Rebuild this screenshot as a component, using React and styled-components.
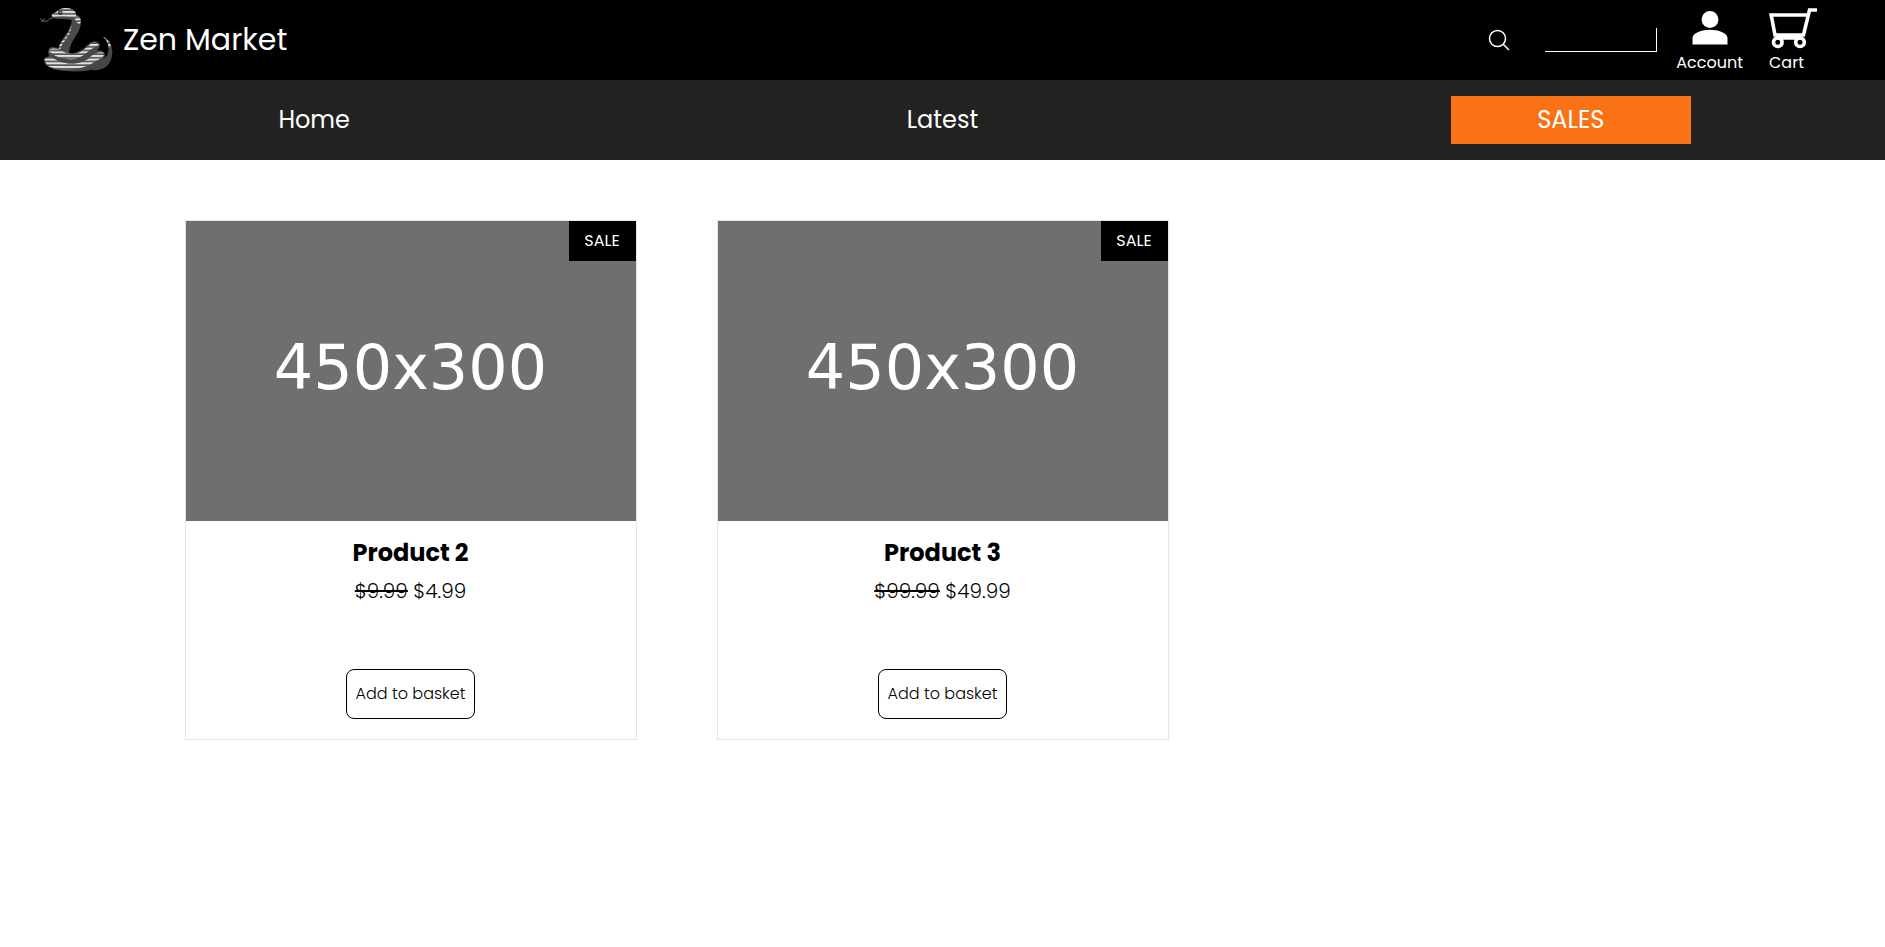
import React from "react";
import styled, { createGlobalStyle } from "styled-components";

const GlobalStyle = createGlobalStyle`
  *, *::before, *::after { box-sizing: border-box; }
  body {
    margin: 0;
    background: #fff;
    color: #000;
    font-family: Poppins, Inter, "Liberation Sans", sans-serif;
    font-size: 16px;
    line-height: 24px;
  }
`;

const Header = styled.header`
  display: flex;
  align-items: center;
  justify-content: space-between;
  height: 80px;
  padding: 0 66px 0 39px;
  background: #000;
  color: #fff;
`;

const Brand = styled.a`
  display: flex;
  align-items: center;
  gap: 8px;
  color: inherit;
  font-size: 30px;
  line-height: 36px;
  text-decoration: none;
`;

const Tools = styled.div`
  display: flex;
  align-items: center;
`;

const SearchForm = styled.form`
  display: flex;
  align-items: center;
  gap: 35px;
  margin-right: 19px;
`;

const SearchButton = styled.button`
  display: flex;
  padding: 0;
  border: 0;
  background: none;
  color: inherit;
`;

const SearchInput = styled.input`
  width: 112px;
  height: 24px;
  padding: 0 4px;
  border: solid #fff;
  border-width: 0 1px 1px 0;
  background: #000;
  color: #fff;
  font: inherit;
`;

const ToolLink = styled.a`
  display: flex;
  flex-direction: column;
  align-items: ${({ $align }) => $align || "center"};
  color: inherit;
  text-decoration: none;
  svg { display: block; }
`;

const ToolLinks = styled.div`
  display: flex;
  gap: 26px;
  padding-bottom: 5px;
`;

const Nav = styled.nav`
  display: grid;
  grid-template-columns: repeat(3, 1fr);
  place-items: center;
  height: 80px;
  background: #222220;
`;

const NavLink = styled.a`
  color: #fff;
  font-size: 24px;
  line-height: 32px;
  text-decoration: none;
`;

const SalesLink = styled(NavLink)`
  width: 240px;
  padding: 8px;
  background: #f97316;
  text-align: center;
`;

const Products = styled.main`
  display: grid;
  grid-template-columns: repeat(3, 452px);
  justify-content: center;
  gap: 80px;
  padding: 60px 0;
`;

const Card = styled.article`
  position: relative;
  display: flex;
  flex-direction: column;
  align-items: center;
  padding-bottom: 20px;
  border: 1px solid #e5e5e5;
`;

const Picture = styled.div`
  display: flex;
  align-items: center;
  justify-content: center;
  width: 100%;
  height: 300px;
  padding-bottom: 6px;
  background: #6f6f6f;
  color: #fff;
  font-family: "DejaVu Sans", sans-serif;
  font-size: 62px;
  line-height: 62px;
`;

const Badge = styled.span`
  position: absolute;
  top: 0;
  right: 0;
  min-width: 67px;
  padding: 8px 12px;
  background: #000;
  color: #fff;
  text-align: center;
`;

const Title = styled.h2`
  margin: 16px 0 8px;
  font-size: 24px;
  font-weight: 700;
  line-height: 32px;
`;

const Price = styled.p`
  margin: 0 0 64px;
  font-size: 20px;
  font-weight: 300;
  line-height: 28px;
  s { text-decoration-thickness: 2px; }
`;

const BasketButton = styled.button`
  min-width: 129px;
  height: 50px;
  padding: 0 8px;
  border: 1px solid #000;
  border-radius: 8px;
  background: #fff;
  color: #000;
  font: inherit;
  font-weight: 300;
`;

function Snake() {
  return (
    <svg width="76" height="68" viewBox="30 18 228 204" aria-hidden="true">
      <defs>
        <pattern id="bands" width="12" height="11" patternUnits="userSpaceOnUse">
          <rect width="12" height="11" fill="#555" />
          <rect width="12" height="6" fill="#e2e2e2" />
        </pattern>
      </defs>
      <path d="M74 53Q62 55 57 61Q50 66 43 63L33 56M43 63L36 66M43 63L46 55" fill="none" stroke="#666" strokeWidth="3" />
      <path d="M222 110Q247 119 250 153Q251 181 235 197Q218 211 190 211L202 181Q225 180 235 165Q242 146 234 127Z" fill="#464646" />
      <path d="M222 110Q240 117 246 139L240 145Q237 122 222 110Z" fill="url(#bands)" />
      <path d="M68 43L82 36Q92 24 111 24Q138 24 142 45Q157 48 156 67Q155 87 139 110Q125 128 119 160L88 148Q89 134 107 108Q129 79 128 60Q111 56 92 57Q75 57 69 52Z" fill="#4b4b4b" />
      <path d="M68 43L82 36Q92 24 111 24Q138 24 142 45L137 55Q115 46 70 52Z" fill="url(#bands)" />
      <path d="M140 49Q155 48 156 67L150 72L138 63ZM126 79Q120 103 99 124Q89 137 88 148L94 147Q98 132 111 118Q123 102 128 83Z" fill="url(#bands)" />
      <circle cx="94" cy="38" r="7" fill="#343434" />
      <circle cx="95" cy="37" r="3" fill="#888" />
      <path d="M60 147Q63 137 86 144L126 160Q157 156 176 134Q192 118 207 127Q221 135 203 151Q223 150 228 163Q231 175 209 183L215 187Q206 209 175 212Q126 218 78 209Q48 201 45 183Q44 173 61 168Q54 155 60 147Z" fill="#484848" />
      <path d="M62 148Q77 141 98 152Q128 170 155 155Q176 143 187 130Q200 122 209 133Q210 144 189 153Q153 184 113 176Q82 173 62 158Z" fill="url(#bands)" />
      <path d="M47 174L73 171Q100 192 133 191Q167 190 191 165Q206 154 224 158Q229 171 200 183Q174 203 137 207Q88 210 61 200Q45 188 47 174Z" fill="url(#bands)" />
      <path d="M61 160Q86 183 119 186Q149 183 173 164Q190 149 210 140" fill="none" stroke="#484848" strokeWidth="9" />
    </svg>
  );
}

function SearchIcon() {
  return (
    <svg width="22" height="22" viewBox="0 0 22 22" fill="none" stroke="currentColor" strokeWidth="1.5" aria-hidden="true">
      <circle cx="9.5" cy="9.5" r="8" />
      <path d="M15.2 15.2L21 21" />
    </svg>
  );
}

function AccountIcon() {
  return (
    <svg width="44" height="51" viewBox="0 0 44 51" fill="currentColor" aria-hidden="true">
      <circle cx="22" cy="19.5" r="8.4" />
      <path d="M4.5 44.5V38C4.5 33 14 29.8 22 29.8S39.5 33 39.5 38V44.5Z" />
    </svg>
  );
}

function CartIcon() {
  return (
    <svg width="50" height="51" viewBox="0 0 50 51" fill="none" stroke="currentColor" strokeWidth="3.6" aria-hidden="true">
      <path d="M48 10H40.5L34.5 35H6L2.2 15H38.5M9 38H32" />
      <circle cx="8.8" cy="42.2" r="4.3" />
      <circle cx="31" cy="42.2" r="4.3" />
    </svg>
  );
}

const products = [
  { name: "Product 2", was: "$9.99", now: "$4.99" },
  { name: "Product 3", was: "$99.99", now: "$49.99" },
];

export default function App() {
  return (
    <>
      <GlobalStyle />
      <Header>
        <Brand href="#"><Snake />Zen Market</Brand>
        <Tools>
          <SearchForm role="search">
            <SearchButton type="button" aria-label="Search"><SearchIcon /></SearchButton>
            <SearchInput type="text" aria-label="Search products" />
          </SearchForm>
          <ToolLinks>
            <ToolLink href="#account"><AccountIcon />Account</ToolLink>
            <ToolLink href="#cart" $align="flex-start"><CartIcon />Cart</ToolLink>
          </ToolLinks>
        </Tools>
      </Header>
      <Nav>
        <NavLink href="#home">Home</NavLink>
        <NavLink href="#latest">Latest</NavLink>
        <SalesLink href="#sales">SALES</SalesLink>
      </Nav>
      <Products>
        {products.map((p) => (
          <Card key={p.name}>
            <Picture>450x300</Picture>
            <Badge>SALE</Badge>
            <Title>{p.name}</Title>
            <Price><s>{p.was}</s> {p.now}</Price>
            <BasketButton type="button">Add to basket</BasketButton>
          </Card>
        ))}
      </Products>
    </>
  );
}
